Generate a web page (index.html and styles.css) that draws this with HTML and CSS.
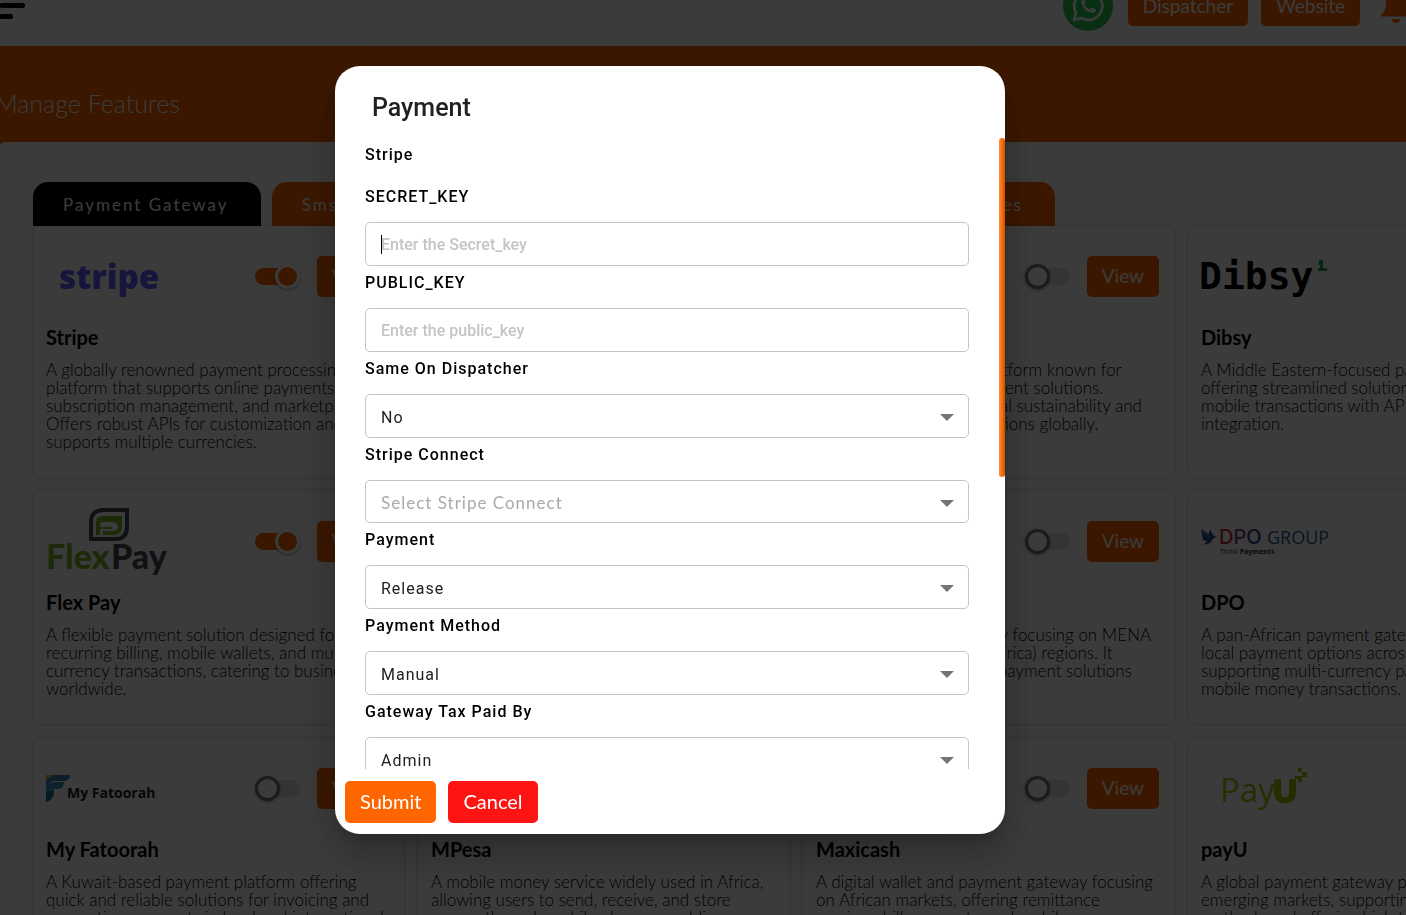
FILE: index.html
```html
<!DOCTYPE html>
<html lang="en">
<head>
<meta charset="utf-8">
<meta name="viewport" content="width=device-width, initial-scale=1">
<title>Manage Features</title>
<link rel="stylesheet" href="styles.css">
</head>
<body>
<div class="page">
  <header class="topbar">
    <button class="icon-btn" aria-label="Toggle menu">
      <svg width="26" height="40" viewBox="0 0 26 40"><g stroke="#000" stroke-width="5" stroke-linecap="round"><path d="M2 8.500H17M2 19.500H22.500M2 30.500H10.500"/></g></svg>
    </button>
    <div class="actions">
      <a class="whatsapp" href="#" aria-label="WhatsApp">
        <svg width="50" height="50" viewBox="0 0 50 50"><circle cx="25" cy="25" r="25" fill="#25c950"/><path d="M11 39l2-7.300a14 14 0 1 1 5.300 5.400z" fill="none" stroke="#fff" stroke-width="2.800" stroke-linejoin="round"/><path d="M20.500 17.500c-1 .2-2.300 1.500-2.200 3.700.2 3 3 6.700 6.200 9 2.600 1.800 5.500 2.600 7.500.8 1-.9 1.200-2.300.8-2.700l-3.700-1.800c-.8-.3-1.500 2-2.300 1.800-2.300-.8-4.500-2.900-5.400-5-.3-.8 1.300-1.500 1.100-2.400l-1.400-3.200c-.1-.2-.3-.3-.6-.2z" fill="#fff"/></svg>
      </a>
      <button class="btn">Dispatcher</button>
      <button class="btn">Website</button>
      <button class="icon-btn bell" aria-label="Notifications">
        <svg width="30" height="38" viewBox="0 0 30 38"><path d="M15 2c-6 0-10 4.500-10 11 0 8-1 12-5 15v1.500h30V28c-4-3-5-7-5-15 0-6.500-4-11-10-11zM11 32h8a4 4 0 0 1-8 0z" fill="#f60"/></svg>
      </button>
    </div>
  </header>
  <main class="banner">
    <h1 class="page-title">Manage Features</h1>
    <section class="panel">
      <nav class="tabs">
        <button class="tab tab-active">Payment Gateway</button>
        <button class="tab">Sms Gateway</button>
        <button class="tab tab-last">Features</button>
      </nav>
      <div class="grid">
        <article class="card">
          <div class="card-head">
            <svg class="logo" width="125" height="80" viewBox="0 0 125 80"><text x="13" y="53" class="lg-stripe">stripe</text></svg>
            <input class="switch" type="checkbox" role="switch" aria-label="Enable Stripe" checked><button class="btn">View</button>
          </div>
          <h2>Stripe</h2>
          <p>A globally renowned payment processing<br>platform that supports online payments,<br>subscription management, and marketplaces.<br>Offers robust APIs for customization and<br>supports multiple currencies.</p>
        </article>
        <article class="card"></article>
        <article class="card">
          <div class="card-head">
            <span class="logo"></span>
            <input class="switch" type="checkbox" role="switch" aria-label="Enable gateway"><button class="btn">View</button>
          </div>
          <h2>&nbsp;</h2>
          <p>A European payments platform known for<br>fast and easy online payment solutions.<br>The main focus is on social sustainability and<br>serving its many organisations globally.</p>
        </article>
        <article class="card">
          <div class="card-head">
            <svg class="logo" width="127" height="80" viewBox="0 0 127 80"><text x="-2" y="53" class="lg-dibsy">Dibsy</text><path d="M118 24h4v8h4v3h-9v-3h2v-3h-2v-2h1z" fill="#1fa94a"/></svg>
          </div>
          <h2>Dibsy</h2>
          <p>A Middle Eastern-focused payment gateway<br>offering streamlined solutions for online and<br>mobile transactions with API-driven<br>integration.</p>
        </article>

        <article class="card">
          <div class="card-head">
            <svg class="logo" width="125" height="80" viewBox="0 0 125 80"><path d="M45 38V21C45 13 50 9 57 9h24v17c0 8-4 12-12 12z" fill="none" stroke="#454c57" stroke-width="4"/><path d="M50 34V22c0-5 3-7 7-7h19v10c0 6-3 9-8 9H57v-4h9c8 0 8-9 0-9H58c-3 0-4 1-4 3v2h12v2H54v6z" fill="#7fb62c"/><text x="0" y="68" class="lg-flex" fill="#7fb62c">Flex</text><text x="65" y="68" class="lg-flex" fill="#454c57">Pay</text></svg>
            <input class="switch" type="checkbox" role="switch" aria-label="Enable Flex Pay" checked><button class="btn">View</button>
          </div>
          <h2>Flex Pay</h2>
          <p>A flexible payment solution designed for<br>recurring billing, mobile wallets, and multi-<br>currency transactions, catering to businesses<br>worldwide.</p>
        </article>
        <article class="card"></article>
        <article class="card">
          <div class="card-head">
            <span class="logo"></span>
            <input class="switch" type="checkbox" role="switch" aria-label="Enable gateway"><button class="btn">View</button>
          </div>
          <h2>&nbsp;</h2>
          <p>A global payment gateway focusing on MENA<br>(Middle East and North Africa) regions. It<br>offers secure and simple payment solutions<br>for all regional merchants.</p>
        </article>
        <article class="card">
          <div class="card-head">
            <svg class="logo" width="127" height="80" viewBox="0 0 127 80"><path d="M0 28l8 5 1-5 3 6 3 2-3 2-3 4-6 2 3-4-4-1z" fill="#23497d"/><path d="M0 28l8 5 1 4-7-4z" fill="#3b82b5"/><text x="18" y="43" class="lg-dpo"><tspan fill="#c0272d">D</tspan><tspan fill="#7b3a8a">P</tspan><tspan fill="#2f3c8f">O</tspan></text><text x="66" y="43" class="lg-group" fill="#2a5c97">GROUP</text><text x="19" y="53" class="lg-think">Think <tspan font-weight="700">Payments</tspan></text></svg>
          </div>
          <h2>DPO</h2>
          <p>A pan-African payment gateway offering<br>local payment options across the region,<br>supporting multi-currency payments and<br>mobile money transactions.</p>
        </article>

        <article class="card">
          <div class="card-head">
            <svg class="logo" width="125" height="80" viewBox="0 0 125 80"><path d="M0 27h6L0 33z" fill="#e8b920"/><path d="M6 27h18c0 4-3 6-6 6H8c-3 0-5 2-8 4v-4z" fill="#3181b0"/><path d="M0 37c3-2 5-3 8-3h10c0 5-3 7-7 7-5 0-5 2-11 4z" fill="#3c93c4"/><path d="M0 45c3-2 6-3 8-3 0 6-2 11-8 12z" fill="#1f6da0"/><text x="21" y="50" class="lg-fat">My Fatoorah</text></svg>
            <input class="switch" type="checkbox" role="switch" aria-label="Enable My Fatoorah"><button class="btn">View</button>
          </div>
          <h2>My Fatoorah</h2>
          <p>A Kuwait-based payment platform offering<br>quick and reliable solutions for invoicing and<br>supporting payments in local and international<br>currencies.</p>
        </article>
        <article class="card">
          <div class="card-head"></div>
          <h2>MPesa</h2>
          <p>A mobile money service widely used in Africa,<br>allowing users to send, receive, and store<br>money through mobile phones, enabling<br>payments.</p>
        </article>
        <article class="card">
          <div class="card-head">
            <span class="logo"></span>
            <input class="switch" type="checkbox" role="switch" aria-label="Enable Maxicash"><button class="btn">View</button>
          </div>
          <h2>Maxicash</h2>
          <p>A digital wallet and payment gateway focusing<br>on African markets, offering remittance<br>services, bill payments, and mobile<br>top-ups.</p>
        </article>
        <article class="card">
          <div class="card-head">
            <svg class="logo" width="125" height="80" viewBox="0 0 125 80"><text x="19" y="54" class="lg-pay">Pay</text><path d="M80 31v14c0 6 8 6 8 0V31h7v14c0 14-22 14-22 0V31z" fill="#a6c307"/><path d="M97 20h4v4h-4zM101 24h5v5h-5zM94 28h7v6h-4v-3h-3z" fill="#a6c307"/></svg>
          </div>
          <h2>payU</h2>
          <p>A global payment gateway provider for<br>emerging markets, supporting various<br>methods and offering high transaction<br>security.</p>
        </article>
      </div>
    </section>
  </main>
</div>

<div class="overlay">
  <form class="modal" role="dialog" aria-modal="true" aria-labelledby="dlg-title">
    <h2 class="modal-title" id="dlg-title">Payment</h2>
    <div class="modal-body">
      <h3 class="label">Stripe</h3>
      <label class="label" for="secret">SECRET_KEY</label>
      <div class="field"><input class="control" id="secret" type="text" placeholder="Enter the Secret_key"><span class="caret"></span></div>
      <label class="label" for="public">PUBLIC_KEY</label>
      <div class="field"><input class="control" id="public" type="text" placeholder="Enter the public_key"></div>
      <label class="label" for="same">Same On Dispatcher</label>
      <div class="field"><select class="control" id="same"><option>No</option><option>Yes</option></select><svg class="arrow" width="14" height="7" viewBox="0 0 14 7"><path d="M0 0h14L7 7z"/></svg></div>
      <label class="label" for="connect">Stripe Connect</label>
      <div class="field"><select class="control control-empty" id="connect"><option>Select Stripe Connect</option></select><svg class="arrow" width="14" height="7" viewBox="0 0 14 7"><path d="M0 0h14L7 7z"/></svg></div>
      <label class="label" for="payment">Payment</label>
      <div class="field"><select class="control" id="payment"><option>Release</option></select><svg class="arrow" width="14" height="7" viewBox="0 0 14 7"><path d="M0 0h14L7 7z"/></svg></div>
      <label class="label" for="method">Payment Method</label>
      <div class="field"><select class="control" id="method"><option>Manual</option></select><svg class="arrow" width="14" height="7" viewBox="0 0 14 7"><path d="M0 0h14L7 7z"/></svg></div>
      <label class="label" for="tax">Gateway Tax Paid By</label>
      <div class="field"><select class="control" id="tax"><option>Admin</option></select><svg class="arrow" width="14" height="7" viewBox="0 0 14 7"><path d="M0 0h14L7 7z"/></svg></div>
      <span class="scroll-thumb"></span>
    </div>
    <footer class="modal-foot">
      <button class="btn" type="submit">Submit</button>
      <button class="btn btn-cancel" type="button">Cancel</button>
    </footer>
  </form>
</div>
</body>
</html>
```
FILE: styles.css
```css
*, *::before { box-sizing: border-box; }
html, body { margin: 0; height: 100%; overflow: hidden; }
body { background: #fff; color: #000; font-family: Lato, "Open Sans", sans-serif; font-size: 16px; }
h1, h2, h3, p { margin: 0; }
button, input, select { font-family: inherit; margin: 0; }

.topbar { height: 80px; margin-top: -34px; display: flex; align-items: center; justify-content: space-between; }
.icon-btn { display: block; padding: 0; border: 0; background: none; }
.icon-btn svg, .whatsapp svg { display: block; }
.actions { display: flex; align-items: center; gap: 13px; }
.whatsapp { margin-right: 2px; }
.bell { margin: 0 -5px 0 8px; }
.btn { height: 41px; padding: 0 15px 2px; border: 0; border-radius: 5px; background: #f60; color: #fff; font-size: 19px; font-weight: 400; white-space: nowrap; }
.topbar .btn { height: 40px; }

.banner { background: #f60; }
.page-title { height: 96px; margin-left: -5px; padding-top: 20px; font-size: 25px; font-weight: 300; line-height: 74px; color: #fff; }
.panel { width: calc(100% + 168px); margin-left: -4px; padding: 40px 11px 0 37px; border-radius: 10px; background: #fff; }
.tabs { display: flex; gap: 11px; max-width: 1022px; }
.tab { height: 44px; padding: 0 32px 0 30px; border: 0; border-radius: 15px 15px 0 0; background: #f60; color: #fff; font-size: 17px; letter-spacing: 2px; }
.tab-active { background: #000; }
.tab-last { margin-left: auto; }

.grid { display: grid; grid-template-columns: repeat(4, minmax(0, 1fr)); gap: 14px; }
.card { padding: 10px 15px 26px 13px; border-radius: 8px; box-shadow: 0 0 4px rgba(0, 0, 0, .22); white-space: nowrap; overflow: hidden; }
.card-head { height: 80px; display: flex; align-items: center; }
.logo { flex: none; margin-right: auto; }
.card h2 { margin: 11px 0 14px; font-size: 20px; font-weight: 700; line-height: 20px; }
.card p { font-size: 17px; font-weight: 300; line-height: 18px; color: #000; }

.switch { appearance: none; position: relative; width: 45px; height: 17px; margin-right: 17px; border-radius: 9px; background: #e0e0e0; }
.switch::before { content: ""; position: absolute; left: 0; top: -4px; width: 25px; height: 25px; border: 3px solid #777; border-radius: 50%; background: #fff; box-shadow: 0 1px 3px rgba(0, 0, 0, .4); }
.switch:checked { background: linear-gradient(90deg, #f60 30px, transparent 30px); }
.switch:checked::before { left: 20px; border-color: #fff; background: #f60; }

.lg-stripe { font: 800 33px "Open Sans", sans-serif; fill: #635bff; }
.lg-dibsy { font: 700 38px "DejaVu Sans Mono", monospace; fill: #000; }
.lg-flex { font: 900 34px Lato, sans-serif; }
.lg-dpo { font: 500 20px Inter, sans-serif; }
.lg-group { font: 400 18px "Open Sans", sans-serif; }
.lg-think { font: 400 7px "Open Sans", sans-serif; fill: #1c2b50; }
.lg-fat { font: 700 14px "Open Sans", sans-serif; fill: #222; }
.lg-pay { font: 400 33px "Open Sans", sans-serif; fill: #a6c307; }

.overlay { position: fixed; inset: 0; padding: 0 66px 15px 0; display: flex; align-items: center; justify-content: center; background: rgba(0, 0, 0, .77); }
.modal { position: relative; width: 50%; min-width: 320px; height: 84vh; display: flex; flex-direction: column; border-radius: 25px; background: #fff; box-shadow: 0 11px 15px -7px rgba(0, 0, 0, .2), 0 24px 38px 3px rgba(0, 0, 0, .14), 0 9px 46px 8px rgba(0, 0, 0, .12); font-family: Roboto, sans-serif; }
.modal-title { padding: 26px 37px 14px; font-size: 25px; font-weight: 500; line-height: 32px; color: #212121; }
.modal-body { position: relative; flex: 1; min-height: 0; padding: 0 36px 0 30px; overflow: hidden; }
.label { display: block; height: 32px; font-size: 16px; font-weight: 500; line-height: 34px; letter-spacing: 1px; }
h3.label { margin-bottom: 10px; }
.field { position: relative; margin-top: 10px; }
.control { display: block; width: 100%; height: 44px; padding: 2px 15px 0; border: 1px solid #c4c4c4; border-radius: 5px; background: #fff; color: #212121; font-family: Roboto, sans-serif; font-size: 16px; outline: 0; }
select.control { appearance: none; padding-top: 4px; letter-spacing: 1px; }
.control::placeholder { color: #c4c4c4; opacity: 1; font-weight: 500; }
select.control-empty { height: 43px; padding-top: 2px; color: #aaa; font-family: Lato, sans-serif; font-size: 17px; }
.arrow { position: absolute; right: 15px; top: 20px; fill: #757575; pointer-events: none; }
.caret { position: absolute; left: 16px; top: 13px; width: 1px; height: 19px; background: #000; }
.scroll-thumb { position: absolute; top: 0; right: 0; width: 6px; height: 339px; border-radius: 3px; background: linear-gradient(90deg, #ff8a3c, #f5700f 50%, #c95000); }
.modal-foot { display: flex; gap: 12px; padding: 12px 10px 11px; }
.modal-foot .btn { height: 42px; padding-bottom: 3px; font-family: Lato, sans-serif; font-size: 20px; }
.modal-foot .btn-cancel { background: #ff1414; }
```
